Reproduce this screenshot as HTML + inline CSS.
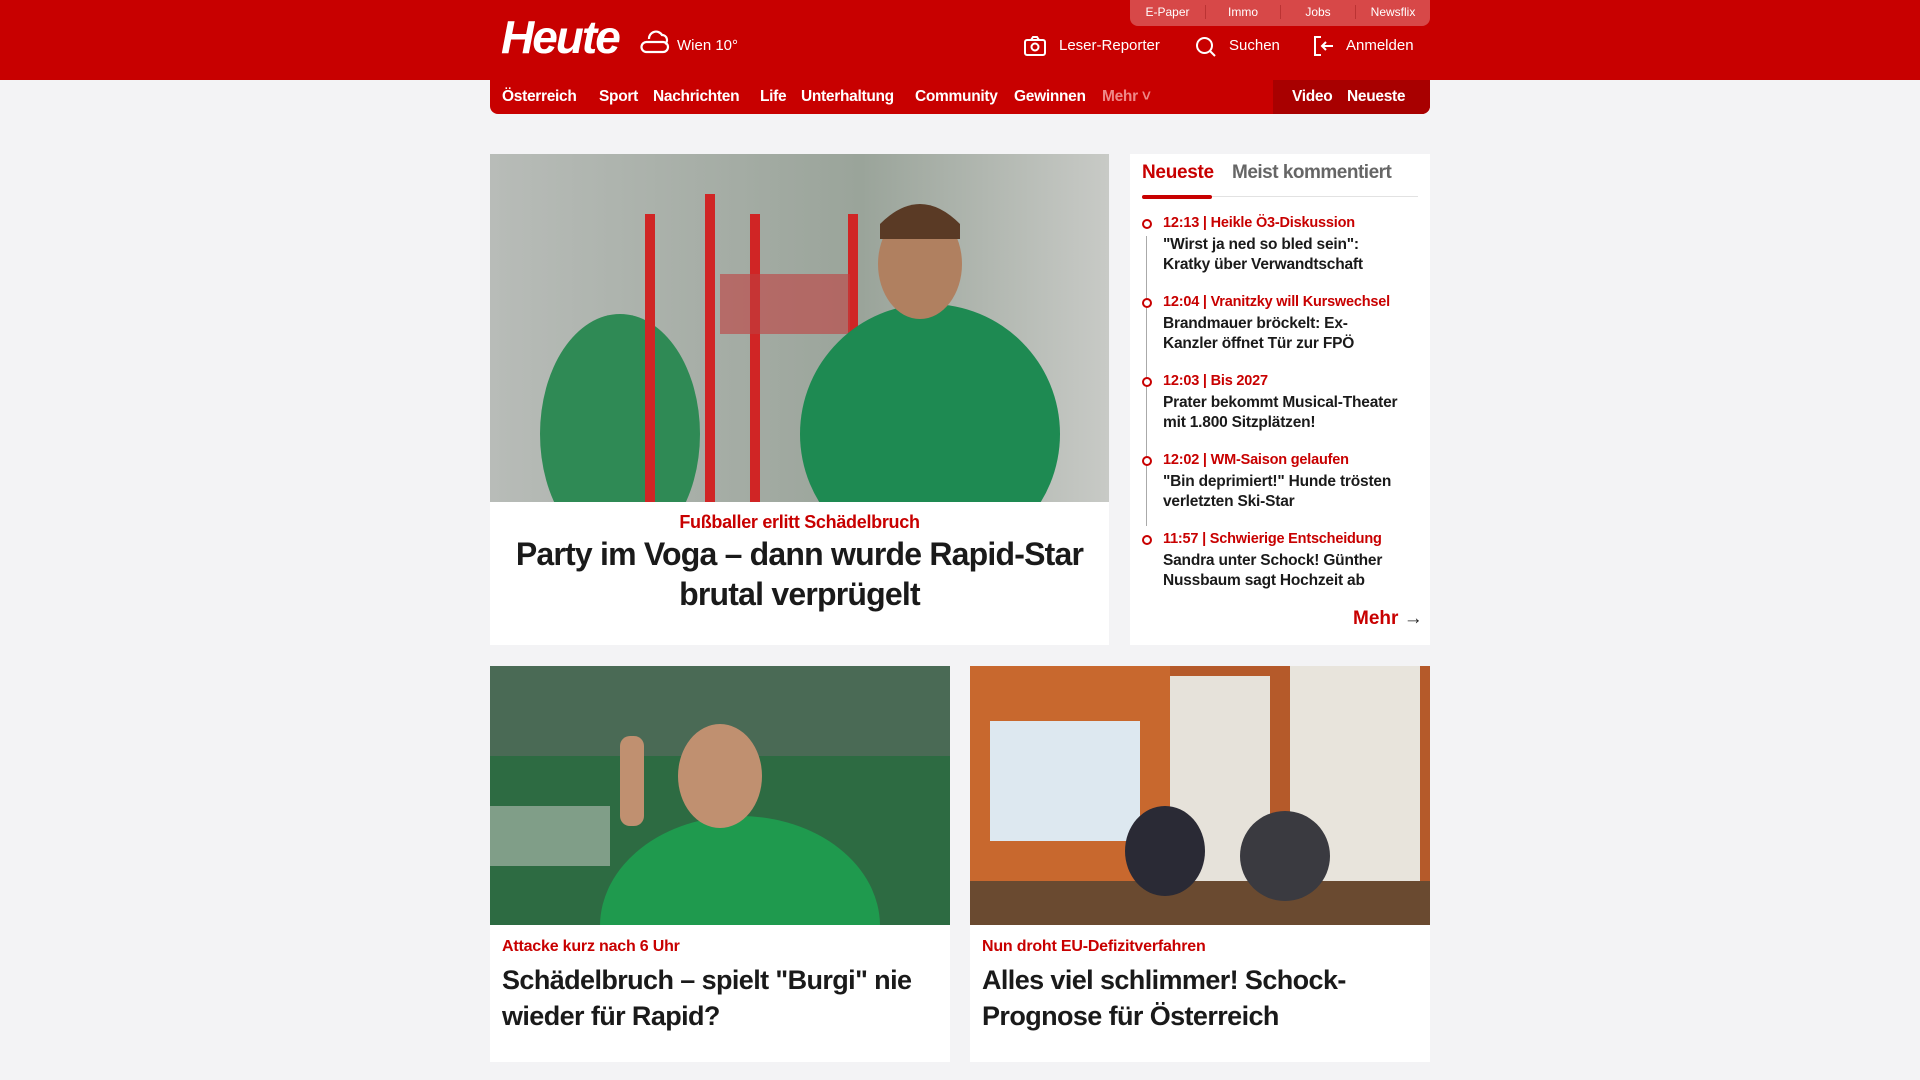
<!DOCTYPE html>
<html><head><meta charset="utf-8"><style>
*{margin:0;padding:0;box-sizing:border-box}
body{width:1920px;height:1080px;background:#f3f3f5;font-family:"Liberation Sans",sans-serif;overflow:hidden;position:relative}
.a{position:absolute;white-space:nowrap}
.hdr{position:absolute;left:0;top:0;width:1920px;height:80px;background:#c80000}
.nav{position:absolute;left:490px;top:80px;width:940px;height:34px;background:#c80000;border-radius:0 0 8px 8px}
.nav span{position:absolute;top:8px;color:#fff;font-weight:bold;font-size:15.5px;letter-spacing:-0.3px}
.tabs{position:absolute;left:1130px;top:0;width:300px;height:26px;background:#d74848;border-radius:0 0 8px 8px}
.tabs span{position:absolute;top:5px;color:#fff;font-size:12px;width:75px;text-align:center}
.card{position:absolute;background:#fff}
.red{color:#c80000;font-weight:bold}
.h{color:#1a1a1a;font-weight:bold}
.it .t{font-size:14.5px;letter-spacing:-0.2px}
.it .d{font-size:15.5px;line-height:20px;letter-spacing:-0.2px}
</style></head><body>
<div class="hdr"></div>
<div class="tabs"><span style="left:0">E-Paper</span><span style="left:75px;border-left:1px solid #b33">Immo</span><span style="left:150px;border-left:1px solid #b33">Jobs</span><span style="left:225px;border-left:1px solid #b33">Newsflix</span></div>
<div class="a" style="left:501px;top:10px;color:#fff;font-weight:bold;font-style:italic;font-size:46px;letter-spacing:-2px">Heute</div>
<svg class="a" style="left:640px;top:26px" width="32" height="30" viewBox="0 0 32 30" fill="none" stroke="#fff" stroke-width="2.2"><path d="M9 13a7 7 0 0 1 13-4a5 5 0 0 1 3 9"/><path d="M6 26a5 5 0 0 1 1-10h16a5 5 0 0 1 0 10z"/></svg>
<div class="a" style="left:677px;top:37px;color:#fff;font-size:15px">Wien 10°</div>
<svg class="a" style="left:1024px;top:36px" width="22" height="20" viewBox="0 0 22 20" fill="none" stroke="#fff" stroke-width="2"><rect x="1" y="4" width="20" height="15" rx="2"/><path d="M7 4l2-3h4l2 3"/><circle cx="11" cy="11" r="3.5"/></svg>
<div class="a" style="left:1059px;top:37px;color:#fff;font-size:15px">Leser-Reporter</div>
<svg class="a" style="left:1195px;top:36px" width="22" height="22" viewBox="0 0 22 22" fill="none" stroke="#fff" stroke-width="2"><circle cx="9.5" cy="9.5" r="7.5"/><path d="M15 15l5 5"/></svg>
<div class="a" style="left:1229px;top:37px;color:#fff;font-size:15px">Suchen</div>
<svg class="a" style="left:1313px;top:35px" width="22" height="22" viewBox="0 0 22 22" fill="none" stroke="#fff" stroke-width="2"><path d="M8 2H2v18h6"/><path d="M20 11H9M13 7l-4 4 4 4"/></svg>
<div class="a" style="left:1346px;top:37px;color:#fff;font-size:15px">Anmelden</div>
<div class="nav">
<div style="position:absolute;left:783px;top:0;width:157px;height:34px;background:#a80000;border-radius:0 0 8px 0"></div>
<span style="left:12px">Österreich</span><span style="left:109px">Sport</span><span style="left:163px">Nachrichten</span><span style="left:270px">Life</span><span style="left:311px">Unterhaltung</span><span style="left:425px">Community</span><span style="left:524px">Gewinnen</span><span style="left:612px;color:#e88">Mehr ˅</span>
<span style="left:802px">Video</span><span style="left:857px">Neueste</span>
</div>

<div class="card" style="left:490px;top:154px;width:619px;height:491px">
<svg width="619" height="348" style="display:block"><defs><linearGradient id="g1" x1="0" x2="1"><stop offset="0" stop-color="#b8bcb8"/><stop offset=".6" stop-color="#9aa49a"/><stop offset="1" stop-color="#c8cac6"/></linearGradient></defs>
<rect width="619" height="348" fill="url(#g1)"/>
<ellipse cx="130" cy="280" rx="80" ry="120" fill="#2f8a55"/>
<rect x="155" y="60" width="10" height="288" fill="#d02525"/><rect x="215" y="40" width="10" height="308" fill="#d02525"/><rect x="260" y="60" width="10" height="288" fill="#d02525"/><rect x="358" y="60" width="10" height="288" fill="#d02525"/>
<path d="M230 120h130v60h-130z" fill="#c04040" opacity=".6"/>
<ellipse cx="440" cy="280" rx="130" ry="130" fill="#1e8a52"/>
<ellipse cx="430" cy="110" rx="42" ry="55" fill="#b08060"/><path d="M390 70q40-40 80 0v15h-80z" fill="#5a3a25"/>
</svg>
<div class="a red" style="left:0;width:619px;text-align:center;top:358px;font-size:18px;letter-spacing:-0.3px">Fußballer erlitt Schädelbruch</div>
<div class="a h" style="left:0;width:619px;text-align:center;top:380px;font-size:32px;line-height:40px;letter-spacing:-0.8px">Party im Voga – dann wurde Rapid-Star<br>brutal verprügelt</div>
</div>

<div class="card" style="left:1130px;top:154px;width:300px;height:491px">
<div class="a" style="left:12px;top:8px;font-size:19px;color:#c80000;font-weight:bold;letter-spacing:-0.3px">Neueste</div>
<div class="a" style="left:102px;top:8px;font-size:19px;color:#666;font-weight:bold;letter-spacing:-0.5px">Meist kommentiert</div>
<div class="a" style="left:12px;top:42px;width:276px;height:1px;background:#e2e2e2"></div>
<div class="a" style="left:12px;top:41px;width:70px;height:4px;background:#c80000;border-radius:2px"></div>
<div class="a" style="left:16px;top:82px;width:1px;height:290px;background:#aaa"></div>
<div class="it">
<div class="a" style="left:12px;top:65px;width:10px;height:10px;border:2px solid #c80000;border-radius:50%;background:#fff"></div>
<div class="a red t" style="left:33px;top:61px">12:13 | Heikle Ö3-Diskussion</div>
<div class="a h d" style="left:33px;top:81px">"Wirst ja ned so bled sein":<br>Kratky über Verwandtschaft</div>
<div class="a" style="left:12px;top:144px;width:10px;height:10px;border:2px solid #c80000;border-radius:50%;background:#fff"></div>
<div class="a red t" style="left:33px;top:140px">12:04 | Vranitzky will Kurswechsel</div>
<div class="a h d" style="left:33px;top:160px">Brandmauer bröckelt: Ex-<br>Kanzler öffnet Tür zur FPÖ</div>
<div class="a" style="left:12px;top:223px;width:10px;height:10px;border:2px solid #c80000;border-radius:50%;background:#fff"></div>
<div class="a red t" style="left:33px;top:219px">12:03 | Bis 2027</div>
<div class="a h d" style="left:33px;top:239px">Prater bekommt Musical-Theater<br>mit 1.800 Sitzplätzen!</div>
<div class="a" style="left:12px;top:302px;width:10px;height:10px;border:2px solid #c80000;border-radius:50%;background:#fff"></div>
<div class="a red t" style="left:33px;top:298px">12:02 | WM-Saison gelaufen</div>
<div class="a h d" style="left:33px;top:318px">"Bin deprimiert!" Hunde trösten<br>verletzten Ski-Star</div>
<div class="a" style="left:12px;top:381px;width:10px;height:10px;border:2px solid #c80000;border-radius:50%;background:#fff"></div>
<div class="a red t" style="left:33px;top:377px">11:57 | Schwierige Entscheidung</div>
<div class="a h d" style="left:33px;top:397px">Sandra unter Schock! Günther<br>Nussbaum sagt Hochzeit ab</div>
</div>
<div class="a red" style="left:223px;top:454px;font-size:19px">Mehr <span style="color:#222;font-weight:bold">→</span></div>
</div>

<div class="card" style="left:490px;top:666px;width:460px;height:396px">
<svg width="460" height="259" style="display:block"><rect width="460" height="259" fill="#2d6b42"/><rect width="460" height="90" fill="#4a6a55"/><rect x="0" y="140" width="120" height="60" fill="#b8c0b8" opacity=".6"/>
<ellipse cx="250" cy="260" rx="140" ry="110" fill="#1f9a4e"/><ellipse cx="230" cy="110" rx="42" ry="52" fill="#c09070"/><rect x="130" y="70" width="24" height="90" rx="10" fill="#c09070"/></svg>
<div class="a red" style="left:12px;top:272px;font-size:16px;letter-spacing:-0.2px">Attacke kurz nach 6 Uhr</div>
<div class="a h" style="left:12px;top:296px;font-size:27px;line-height:36px;letter-spacing:-0.6px">Schädelbruch – spielt "Burgi" nie<br>wieder für Rapid?</div>
</div>

<div class="card" style="left:970px;top:666px;width:460px;height:396px">
<svg width="460" height="259" style="display:block"><rect width="460" height="259" fill="#b55a2a"/><rect x="0" y="0" width="200" height="259" fill="#c8682e"/>
<rect x="20" y="55" width="150" height="120" fill="#dde8f0"/><rect x="200" y="10" width="100" height="249" fill="#e6e2da"/><rect x="320" y="0" width="130" height="259" fill="#e8e4dc"/>
<rect x="0" y="215" width="460" height="44" fill="#6a4a30"/><ellipse cx="195" cy="185" rx="40" ry="45" fill="#2a2a35"/><ellipse cx="315" cy="190" rx="45" ry="45" fill="#3a3a40"/></svg>
<div class="a red" style="left:12px;top:272px;font-size:16px;letter-spacing:-0.2px">Nun droht EU-Defizitverfahren</div>
<div class="a h" style="left:12px;top:296px;font-size:27px;line-height:36px;letter-spacing:-0.6px">Alles viel schlimmer! Schock-<br>Prognose für Österreich</div>
</div>
</body></html>
